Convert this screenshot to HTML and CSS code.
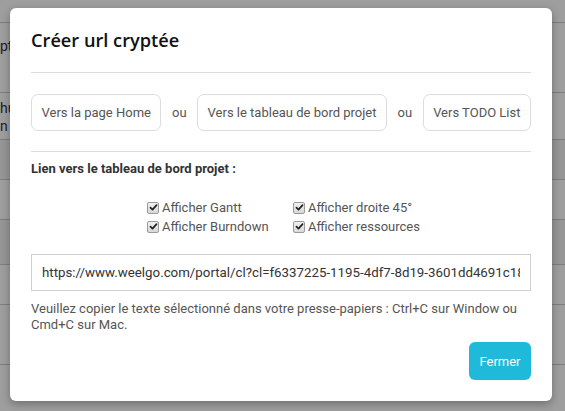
FILE: index.html
```html
<!DOCTYPE html>
<html lang="fr">
<head>
<meta charset="utf-8">
<title>Créer url cryptée</title>
<link rel="stylesheet" href="styles.css">
</head>
<body>
<div class="page">
  <div class="page-top"></div>
  <div class="page-row r1"><span class="bg-text">pt</span></div>
  <div class="page-row r2"><span class="bg-text">hu<br>n</span></div>
  <div class="page-row r3"></div>
  <div class="page-row r4"></div>
  <div class="page-row r5"></div>
  <div class="page-row r6"></div>
  <div class="page-row r7"></div>
</div>
<div class="overlay"></div>
<div class="modal">
  <h4 class="modal-title">Créer url cryptée</h4>
  <hr class="sep">
  <div class="choices">
    <button class="choice">Vers la page Home</button>
    <span class="ou">ou</span>
    <button class="choice">Vers le tableau de bord projet</button>
    <span class="ou">ou</span>
    <button class="choice">Vers TODO List</button>
  </div>
  <hr class="sep">
  <div class="label">Lien vers le tableau de bord projet :</div>
  <div class="checks">
    <label class="check"><span class="box"><svg viewBox="0 0 10 10" width="9" height="9"><path d="M1.6 5.2 L3.9 7.4 L8.4 2.4" fill="none" stroke="#222" stroke-width="1.9" stroke-linecap="round" stroke-linejoin="round"/></svg></span>Afficher Gantt</label>
    <label class="check"><span class="box"><svg viewBox="0 0 10 10" width="9" height="9"><path d="M1.6 5.2 L3.9 7.4 L8.4 2.4" fill="none" stroke="#222" stroke-width="1.9" stroke-linecap="round" stroke-linejoin="round"/></svg></span>Afficher droite 45°</label>
    <label class="check"><span class="box"><svg viewBox="0 0 10 10" width="9" height="9"><path d="M1.6 5.2 L3.9 7.4 L8.4 2.4" fill="none" stroke="#222" stroke-width="1.9" stroke-linecap="round" stroke-linejoin="round"/></svg></span>Afficher Burndown</label>
    <label class="check"><span class="box"><svg viewBox="0 0 10 10" width="9" height="9"><path d="M1.6 5.2 L3.9 7.4 L8.4 2.4" fill="none" stroke="#222" stroke-width="1.9" stroke-linecap="round" stroke-linejoin="round"/></svg></span>Afficher ressources</label>
  </div>
  <input class="url" type="text" readonly value="https://www.weelgo.com/portal/cl?cl=f6337225-1195-4df7-8d19-3601dd4691c18a2e">
  <p class="help">Veuillez copier le texte sélectionné dans votre presse-papiers : Ctrl+C sur Window ou Cmd+C sur Mac.</p>
  <div class="footer">
    <button class="close">Fermer</button>
  </div>
</div>
</body>
</html>
```
FILE: styles.css
```css
* { box-sizing: border-box; }
html, body { margin: 0; padding: 0; }
body {
  width: 565px;
  height: 411px;
  overflow: hidden;
  background: #fff;
  font-family: Roboto, "Liberation Sans", sans-serif;
  position: relative;
}
.page { display: flex; flex-direction: column; }
.page-top { height: 23px; border-bottom: 1px solid #ccc; }
.page-row { border-bottom: 1px solid #ccc; font-size: 14px; color: #333; }
.bg-text { display: block; }
.r1 { height: 70px; padding-top: 15px; }
.r2 { height: 47px; padding-top: 6px; line-height: 18px; }
.r3 { height: 40px; background: #f2f2f2; }
.r4 { height: 40px; }
.r5 { height: 45px; background: #f2f2f2; }
.r6 { height: 40px; }
.r7 { height: 60px; }
.overlay {
  position: absolute;
  inset: 0;
  background: rgba(0, 0, 0, 0.38);
}
.modal {
  position: absolute;
  left: 10px;
  top: 8px;
  width: 542px;
  height: 393px;
  background: #fff;
  border-radius: 6px;
  box-shadow: 0 3px 9px rgba(0, 0, 0, 0.3);
  padding: 20px 21px 20px 21px;
  display: flex;
  flex-direction: column;
}
.modal-title {
  margin: 0;
  font-family: "Open Sans", sans-serif;
  font-weight: 600;
  font-size: 18.2px;
  line-height: 24px;
  color: #111;
}
.sep {
  margin: 20px 0 0 0;
  border: 0;
  border-top: 1px solid #dcdcdc;
  height: 0;
}
.choices {
  display: flex;
  align-items: center;
  justify-content: space-between;
  margin-top: 21px;
}
.choice {
  flex: none;
  white-space: nowrap;
  height: 37px;
  padding: 0 9.5px;
  background: #fff;
  border: 1px solid #dcdcdc;
  border-radius: 7px;
  font-family: Roboto, sans-serif;
  font-size: 13px;
  color: #555;
}
.ou { font-size: 13px; color: #555; }
.choices + .sep { margin-top: 20px; }
.label {
  margin-top: 8px;
  font-size: 13px;
  line-height: 18px;
  font-weight: 700;
  color: #333;
}
.checks {
  margin-top: 20px;
  display: grid;
  grid-template-columns: 146px auto;
  padding-left: 116px;
  font-size: 13px;
  line-height: 19px;
  color: #555;
}
.check { display: flex; align-items: center; gap: 3px; }
.box {
  width: 12px;
  height: 12px;
  border: 1px solid #9a9a9a;
  border-radius: 2px;
  background: linear-gradient(#f0f0f0, #d8d8d8);
  display: flex;
  align-items: center;
  justify-content: center;
}
.url {
  margin-top: 18px;
  height: 37px;
  width: 100%;
  border: 1px solid #d0d0d0;
  border-radius: 0;
  padding: 0 10px;
  font-family: Roboto, sans-serif;
  font-size: 13.3px;
  color: #333;
  outline: none;
}
.help {
  margin: 10px 0 0 0;
  font-size: 13px;
  line-height: 16px;
  color: #555;
}
.footer { margin-top: 9px; display: flex; justify-content: flex-end; }
.close {
  height: 38px;
  width: 62px;
  border: 0;
  border-radius: 6px;
  background: #1fbad9;
  color: #fff;
  font-family: Roboto, sans-serif;
  font-size: 13px;
}
```
